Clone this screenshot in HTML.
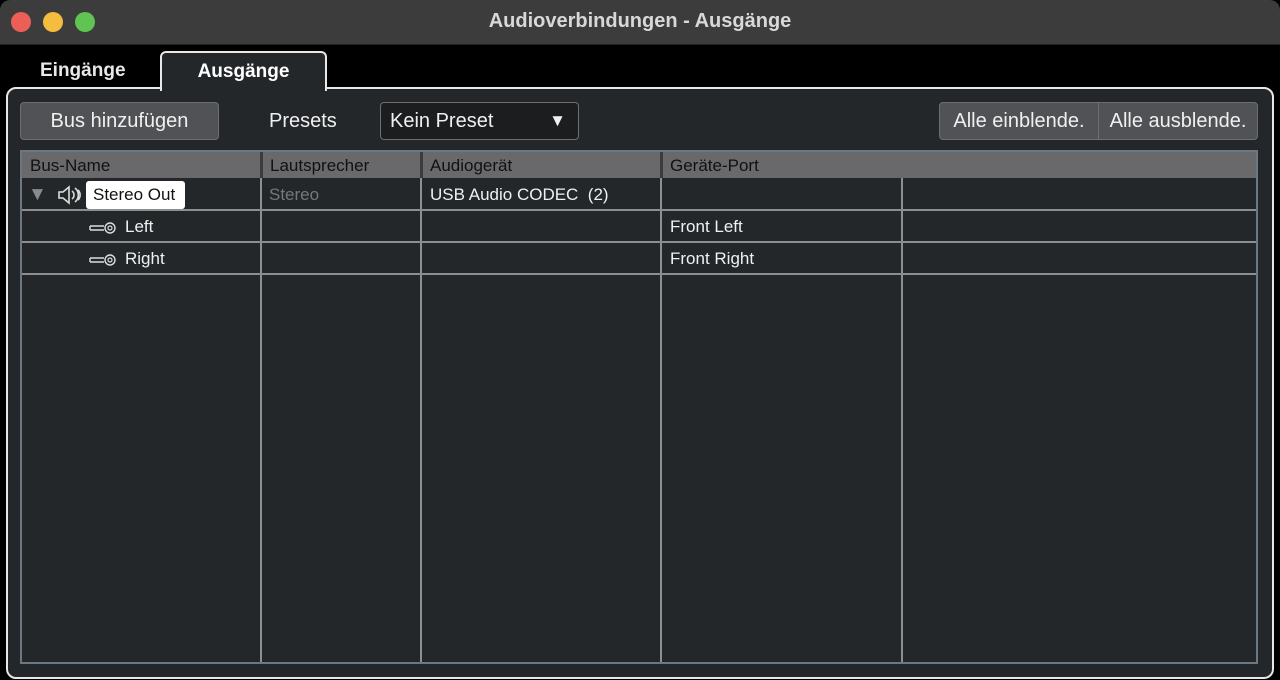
<!DOCTYPE html>
<html><head><meta charset="utf-8"><style>
*{margin:0;padding:0;box-sizing:border-box}
body{width:1280px;height:680px;background:#000;font-family:"Liberation Sans",sans-serif;position:relative;overflow:hidden}
.abs{position:absolute}
.title{left:0;top:0;width:1280px;height:45px;background:#3c3c3c;border-radius:10px 10px 0 0;border-bottom:1px solid #222}
.title .t{width:100%;text-align:center;color:#d8d8d8;font-weight:bold;font-size:20px;top:10px}
.dot{width:20px;height:20px;border-radius:50%;top:12px}
.panel{left:6px;top:87px;width:1268px;height:592px;border:2px solid #e8e8e8;border-radius:10px;background:#23272a}
.tab{left:160px;top:51px;width:167px;height:40px;border:2px solid #e8e8e8;border-bottom:none;border-radius:6px 6px 0 0;background:#23272a;color:#fff;font-weight:bold;font-size:19px;text-align:center;padding-top:8px}
.btn{background:#505255;border:1px solid #6e6e70;color:#f0f0f0;font-size:20px;text-align:center;line-height:36px;border-radius:4px}
.txt{color:#f0f0f0;font-size:17px}
.hl{background:#8e8e8e}
.vl{width:2px;background:#8f8f8f}
</style></head><body>
<div class="abs title"><div class="abs t">Audioverbindungen - Ausgänge</div>
<div class="abs dot" style="left:11px;background:#ec5f57"></div>
<div class="abs dot" style="left:43px;background:#f4bd3f"></div>
<div class="abs dot" style="left:75px;background:#5fc452"></div>
</div>
<div class="abs" style="left:40px;top:60px;color:#e8e8e8;font-weight:bold;font-size:19px">Eingänge</div>
<div class="abs panel"></div>
<div class="abs tab">Ausgänge</div>
<div class="abs btn" style="left:20px;top:102px;width:199px;height:38px">Bus hinzufügen</div>
<div class="abs" style="left:269px;top:110px;color:#f0f0f0;font-size:20px">Presets</div>
<div class="abs" style="left:380px;top:102px;width:199px;height:38px;background:#1c1d1f;border:1px solid #6e6e70;border-radius:4px;color:#f0f0f0;font-size:20px;line-height:36px;padding-left:9px">Kein Preset<span class="abs" style="right:12px;top:0;font-size:17px">▼</span></div>
<div class="abs btn" style="left:939px;top:102px;width:160px;height:38px;border-radius:4px 0 0 4px">Alle einblende.</div>
<div class="abs btn" style="left:1098px;top:102px;width:160px;height:38px;border-radius:0 4px 4px 0">Alle ausblende.</div>
<div class="abs" style="left:20px;top:150px;width:1238px;height:514px;border:2px solid #6c7784;background:#23272a"></div>
<div class="abs" style="left:22px;top:152px;width:1234px;height:26px;background:#69696b"></div>
<div class="abs" style="left:260px;top:152px;width:3px;height:26px;background:#3a3c3e"></div>
<div class="abs" style="left:420px;top:152px;width:3px;height:26px;background:#3a3c3e"></div>
<div class="abs" style="left:660px;top:152px;width:3px;height:26px;background:#3a3c3e"></div>
<div class="abs" style="left:30px;top:156px;color:#111;font-size:17px">Bus-Name</div>
<div class="abs" style="left:270px;top:156px;color:#111;font-size:17px">Lautsprecher</div>
<div class="abs" style="left:430px;top:156px;color:#111;font-size:17px">Audiogerät</div>
<div class="abs" style="left:670px;top:156px;color:#111;font-size:17px">Geräte-Port</div>
<div class="abs vl" style="left:260px;top:178px;height:484px"></div>
<div class="abs vl" style="left:420px;top:178px;height:484px"></div>
<div class="abs vl" style="left:660px;top:178px;height:484px"></div>
<div class="abs vl" style="left:901px;top:178px;height:484px"></div>
<div class="abs hl" style="left:22px;top:209px;width:1234px;height:2px"></div>
<div class="abs hl" style="left:22px;top:241px;width:1234px;height:2px"></div>
<div class="abs hl" style="left:22px;top:273px;width:1234px;height:2px"></div>
<div class="abs" style="left:28px;top:184px;color:#8a8a8a;font-size:19px">▼</div>
<svg class="abs" style="left:57px;top:185px" width="28" height="20" viewBox="0 0 28 20"><path d="M2 7h4l6-5v16l-6-5H2z" fill="none" stroke="#ddd" stroke-width="1.6"/><path d="M15 6a5 5 0 0 1 0 8M18 3a9 9 0 0 1 0 14M21 5a7 7 0 0 1 0 10" fill="none" stroke="#ddd" stroke-width="1.6"/></svg>
<div class="abs" style="left:86px;top:181px;width:99px;height:28px;background:#fff;border-radius:3px;color:#111;font-size:17px;line-height:28px;padding-left:7px">Stereo Out</div>
<div class="abs" style="left:269px;top:185px;color:#777;font-size:17px">Stereo</div>
<div class="abs txt" style="left:430px;top:185px">USB Audio CODEC &nbsp;(2)</div>
<svg class="abs" style="left:89px;top:220px" width="28" height="16"><path d="M1 6h14M1 10h14M1 6v4" stroke="#ddd" stroke-width="1.4" fill="none"/><circle cx="21" cy="8" r="5" fill="none" stroke="#ddd" stroke-width="1.4"/><circle cx="21" cy="8" r="2" fill="none" stroke="#ddd" stroke-width="1.2"/></svg>
<div class="abs txt" style="left:125px;top:217px">Left</div>
<svg class="abs" style="left:89px;top:252px" width="28" height="16"><path d="M1 6h14M1 10h14M1 6v4" stroke="#ddd" stroke-width="1.4" fill="none"/><circle cx="21" cy="8" r="5" fill="none" stroke="#ddd" stroke-width="1.4"/><circle cx="21" cy="8" r="2" fill="none" stroke="#ddd" stroke-width="1.2"/></svg>
<div class="abs txt" style="left:125px;top:249px">Right</div>
<div class="abs txt" style="left:670px;top:217px">Front Left</div>
<div class="abs txt" style="left:670px;top:249px">Front Right</div>
</body></html>
